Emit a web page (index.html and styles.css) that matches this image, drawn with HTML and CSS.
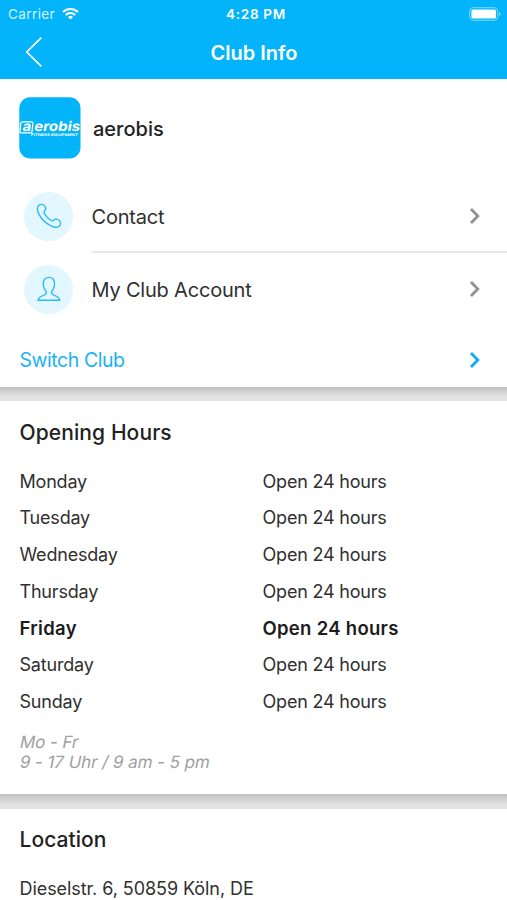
FILE: index.html
```
<!DOCTYPE html>
<html lang="en">

<head>
    <meta charset="utf-8">
    <meta name="viewport" content="width=device-width, initial-scale=1.0">
    <title>Club Info</title>
    <link rel="stylesheet" href="styles.css">
</head>

<body>
    <header>
        <div class="status">
            <div class="carrier">
                <span>Carrier</span>
                <svg class="wifi" width="17" height="13" viewBox="0 0 17 13" fill="none" stroke="#fff" stroke-width="2.1">
                    <path d="M1 5.1a10.6 10.6 0 0 1 15 0" />
                    <path d="M3.8 7.9a6.6 6.6 0 0 1 9.4 0" />
                    <path d="M8.5 12.4 6 9.9a3.6 3.6 0 0 1 5 0z" fill="#fff" stroke="none" />
                </svg>
            </div>
            <span class="time">4:28 PM</span>
            <svg class="battery" width="32" height="14" viewBox="0 0 32 14">
                <rect x=".7" y=".7" width="28" height="12.6" rx="3.4" fill="none" stroke="#7fdafd" />
                <rect x="2.4" y="2.4" width="24.6" height="9.2" rx="1.6" fill="#fff" />
                <path d="M30 5v4.2q1.6-.6 1.6-2.1T30 5z" fill="#7fdafd" />
            </svg>
        </div>
        <div class="titlebar">
            <svg class="back" width="18" height="32" viewBox="0 0 18 32" fill="none" stroke="#fff" stroke-width="1.7">
                <path d="M16.3 1.6 1.8 16l14.5 14.4" />
            </svg>
            <h1>Club Info</h1>
        </div>
    </header>

    <main>
        <section class="club">
            <div class="club-name">
                <svg class="logo" width="62" height="62" viewBox="0 0 62 62">
                    <rect x=".3" y=".3" width="61.2" height="61.2" rx="11" fill="#03b4fa" />
                    <path d="M3.6 24.8H12.5Q14.2 24.8 13.9 26.5L12.8 35.8H2.7Q.7 35.8 1 33.8L1.8 26.600Q2 24.800 3.600 24.800Z" fill="none" stroke="#fff" stroke-width="1.2" />
                    <g transform="translate(6.100 0) skewX(-10)">
                        <text class="logo-text" x="3" y="34.2" textLength="8.500" lengthAdjust="spacingAndGlyphs">a</text>
                        <text class="logo-text" x="14.500" y="34.200" textLength="46" lengthAdjust="spacingAndGlyphs">erobis</text>
                        <text class="logo-sub" x="12.500" y="38.600" textLength="47" lengthAdjust="spacingAndGlyphs">FITNESS EQUIPMENT</text>
                    </g>
                </svg>
                <h2>aerobis</h2>
            </div>

            <a class="row">
                <span class="circle">
                    <svg width="26" height="26" viewBox="0 0 26 26" fill="none" stroke="#2bbcf5" stroke-width="1.4" stroke-linejoin="round">
                        <path d="M2.7 2.6C4.4 .9 7.2 1 8.6 2.9C10 4.8 10.2 6.5 8.9 7.8C7.9 8.8 7.6 9.4 8.3 10.6C10 13.5 12.4 15.8 15.2 17.5C16.3 18.1 17 17.9 18 17C19.3 15.8 21.2 16 23 17.3C24.9 18.7 25.1 21.2 23.4 22.9C21.2 25 18.5 24.6 15.5 23.2C9.6 20.4 5.2 16 2.4 10.1C1 7.1 .7 4.7 2.7 2.6Z" />
                    </svg>
                </span>
                <span class="label">Contact</span>
                <svg class="arrow" width="12" height="18" viewBox="0 0 12 18">
                    <path d="M2 2l6.8 7L2 16" />
                </svg>
            </a>
            <a class="row line">
                <span class="circle">
                    <svg width="26" height="26" viewBox="0 0 26 26" fill="none" stroke="#2bbcf5" stroke-width="1.4" stroke-linejoin="round">
                        <path d="M10.3 15.5C8.3 13.6 7.3 10.7 7.3 7.6C7.3 3.8 9.4 1.4 12.9 1.4S18.5 3.8 18.5 7.6C18.5 10.7 17.5 13.6 15.5 15.5C15 17.7 16 18.5 18.3 19.4C21.4 20.5 23.2 21.4 23.8 24.2H2C2.6 21.4 4.4 20.5 7.5 19.4C9.8 18.5 10.8 17.7 10.3 15.5Z" />
                    </svg>
                </span>
                <span class="label">My Club Account</span>
                <svg class="arrow" width="12" height="18" viewBox="0 0 12 18">
                    <path d="M2 2l6.8 7L2 16" />
                </svg>
            </a>
            <a class="switch">
                <span>Switch Club</span>
                <svg class="arrow" width="12" height="18" viewBox="0 0 12 18">
                    <path d="M2 2l6.8 7L2 16" />
                </svg>
            </a>
        </section>

        <div class="divider"></div>

        <section class="hours">
            <h2>Opening Hours</h2>
            <dl>
                <dt>Monday</dt>
                <dd>Open 24 hours</dd>
                <dt>Tuesday</dt>
                <dd>Open 24 hours</dd>
                <dt>Wednesday</dt>
                <dd>Open 24 hours</dd>
                <dt>Thursday</dt>
                <dd>Open 24 hours</dd>
                <dt class="today">Friday</dt>
                <dd class="today">Open 24 hours</dd>
                <dt>Saturday</dt>
                <dd>Open 24 hours</dd>
                <dt>Sunday</dt>
                <dd>Open 24 hours</dd>
            </dl>
            <div class="note">
                <p>Mo - Fr</p>
                <p>9 - 17 Uhr / 9 am - 5 pm</p>
            </div>
        </section>

        <div class="divider"></div>

        <section class="location">
            <h2>Location</h2>
            <p>Dieselstr. 6, 50859 Köln, DE</p>
        </section>
    </main>
</body>

</html>
```
FILE: styles.css
```
* {
    padding: 0;
    margin: 0;
    box-sizing: border-box;
}

body {
    font-family: "Inter", sans-serif;
    font-size: 18px;
    letter-spacing: -0.2px;
    color: #303030;
    background-color: white;
}

header {
    height: 79px;
    background-color: #03b4fa;
    color: white;
}

.status {
    display: grid;
    grid-template-columns: 1fr auto 1fr;
    align-items: center;
    height: 27px;
    padding: 0 6px 0 8px;
    font-size: 13.5px;
    letter-spacing: 0.4px;
}

.carrier {
    display: flex;
    align-items: center;
    gap: 7px;
    color: #d5f3ff;
}

.time {
    font-weight: 600;
    letter-spacing: 0.7px;
    padding-left: 3px;
}

.battery {
    justify-self: end;
}

.titlebar {
    display: grid;
    grid-template-columns: 60px 1fr 60px;
    align-items: center;
    height: 50px;
}

.back {
    margin-left: 25px;
}

h1 {
    font-size: 20px;
    font-weight: 600;
    letter-spacing: 0;
    text-align: center;
    padding: 1px 0 0 1px;
}

section {
    background-color: white;
}

h2 {
    font-size: 21px;
    font-weight: 500;
    letter-spacing: 0.05px;
    color: #222;
}

.club {
    height: 308px;
    padding-top: 18px;
}

.club-name {
    display: flex;
    align-items: center;
    gap: 12px;
    padding-left: 19px;
    height: 62px;
}

.club-name h2 {
    font-size: 20px;
    letter-spacing: 0;
    padding-top: 1px;
}

.logo text {
    fill: white;
    font-weight: 700;
    letter-spacing: 0;
}

.logo .logo-text {
    font-size: 13.5px;
}

.logo .logo-sub {
    font-size: 3.5px;
}

.row {
    display: flex;
    align-items: center;
    height: 73px;
    padding: 1px 26px 0 24px;
    font-size: 20px;
}

.club-name + .row {
    margin-top: 20px;
}

.line {
    height: 75px;
    margin-top: -1px;
    background: linear-gradient(#e8e8e8, #e8e8e8) 92px 0 / 100% 2px no-repeat;
}

.circle {
    display: flex;
    align-items: center;
    justify-content: center;
    width: 49px;
    height: 49px;
    border-radius: 50%;
    background-color: #e2f7ff;
}

.label {
    flex: 1;
    margin-left: 18.5px;
    padding-top: 1px;
}

.arrow {
    fill: none;
    stroke: #929292;
    stroke-width: 2.8;
}

.switch {
    display: flex;
    align-items: center;
    justify-content: space-between;
    height: 62px;
    padding: 5px 26px 0 19.5px;
    font-size: 19.5px;
    letter-spacing: -0.45px;
    color: #1ab2f5;
}

.switch .arrow {
    stroke: #12aaf2;
}

.divider {
    height: 14px;
    background: linear-gradient(#bfbfbf, #cdcdcd 25%, #dcdcdc 55%, #e3e3e3 75%);
}

.hours,
.location {
    padding: 17px 20px 0 19.5px;
}

.hours {
    height: 393px;
}

.hours + .divider {
    height: 15px;
}

.hours h2,
.location h2 {
    line-height: 30px;
}

.hours h2 {
    letter-spacing: 0.1px;
}

dl {
    display: grid;
    grid-template-columns: 243px 1fr;
    grid-auto-rows: 36.66px;
    align-items: center;
    margin-top: 15px;
}

.today {
    font-size: 18.5px;
    font-weight: 600;
    letter-spacing: 0.3px;
    color: #1c1c1c;
}

.note {
    margin-top: 12px;
    font-size: 17px;
    line-height: 20.5px;
    letter-spacing: -0.07px;
    color: #a0a0a0;
}

.note p {
    transform: skewX(-11deg);
}

.location {
    height: 91px;
    padding-top: 16px;
}

.location p {
    margin-top: 22px;
    line-height: 23px;
    letter-spacing: -0.07px;
}
```
